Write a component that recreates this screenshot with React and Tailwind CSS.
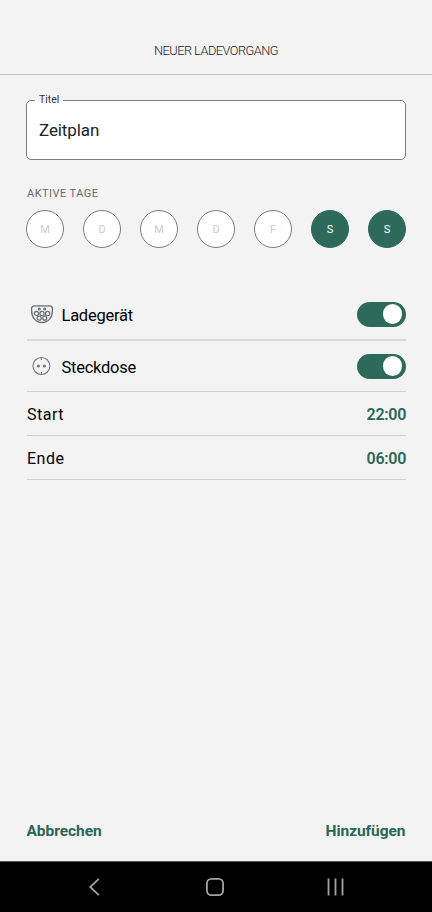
const days = [
  { label: 'M', active: false },
  { label: 'D', active: false },
  { label: 'M', active: false },
  { label: 'D', active: false },
  { label: 'F', active: false },
  { label: 'S', active: true },
  { label: 'S', active: true },
];

function ChargerIcon() {
  return (
    <svg width="24" height="20" viewBox="0 0 24 20" fill="none" stroke="#696c70" className="block">
      <path d="M4.300 1.800h15.400c1.800 0 2.700 1.100 2.700 2.900v2.100c0 6.600-4 11.700-10.400 11.700S1.600 13.400 1.600 6.800V4.700c0-1.800.9-2.900 2.700-2.900z" strokeWidth="1.300" />
      <g strokeWidth="1.200">
        <circle cx="9.300" cy="5" r="0.900" />
        <circle cx="14.700" cy="5" r="0.900" />
        <circle cx="6.400" cy="9.400" r="2.100" />
        <circle cx="12" cy="9.400" r="2.100" />
        <circle cx="17.600" cy="9.400" r="2.100" />
        <circle cx="9.200" cy="14.200" r="2" />
        <circle cx="14.800" cy="14.200" r="2" />
      </g>
    </svg>
  );
}

function SocketIcon() {
  return (
    <svg width="24" height="20" viewBox="0 0 24 20" fill="none" stroke="#75787b" className="block">
      <circle cx="11.400" cy="10" r="8.500" strokeWidth="1.100" />
      <path d="M11.400 1.500v2.500M11.400 16v2.500" strokeWidth="1.100" />
      <circle cx="8.400" cy="10" r="1.600" fill="#75787b" stroke="none" />
      <circle cx="14.400" cy="10" r="1.600" fill="#75787b" stroke="none" />
    </svg>
  );
}

function Toggle() {
  return (
    <button role="switch" aria-checked="true" className="flex h-[25px] w-[49px] items-center justify-end rounded-full bg-[#2d6a5b] pr-1">
      <span className="size-[19.500px] rounded-full bg-white" />
    </button>
  );
}

function DeviceRow({ icon, label, className }) {
  return (
    <div className={`flex items-center justify-between ${className}`}>
      <div className="flex items-center pl-[3px]">
        {icon}
        <span className="ml-[7.500px] pt-[3px] text-[16.500px] leading-6 tracking-[-0.250px] text-black">{label}</span>
      </div>
      <Toggle />
    </div>
  );
}

function TimeRow({ label, time }) {
  return (
    <div className="flex h-11 items-center justify-between border-b border-[#cfcfcf] pt-[2px]">
      <span className="text-base tracking-[0.5px] text-black">{label}</span>
      <span className="text-base font-semibold tracking-[-0.300px] text-[#2a6655]">{time}</span>
    </div>
  );
}

export default function App() {
  return (
    <div className="flex h-[912px] w-[432px] flex-col bg-[#f3f3f3] font-['Roboto',sans-serif]">
      <header className="flex h-[75px] justify-center border-b border-[#c6c6c6] pt-[43px]">
        <h1 className="text-[12.800px] leading-4 font-light tracking-[-0.530px] text-[#222222]">NEUER LADEVORGANG</h1>
      </header>

      <main className="flex-1 px-[26px] pt-[17px]">
        <fieldset className="h-[68px] rounded-[5px] border border-[#7c7c7c] bg-white px-2">
          <legend className="px-1 text-[10.400px] leading-4 text-[#33343c]">Titel</legend>
          <div className="pt-[10px] pl-1 text-[17px] leading-6 tracking-[-0.100px] text-[#20222b]">Zeitplan</div>
        </fieldset>

        <h2 className="mt-[26px] pl-px text-[11px] leading-4 tracking-[0.450px] text-[#68696b]">AKTIVE TAGE</h2>
        <div className="mt-2 flex justify-between">
          {days.map((day, i) => (
            <span
              key={i}
              className={`flex size-[38px] items-center justify-center rounded-full border pt-[2px] text-[11px] ${
                day.active ? 'border-[#2d6a5b] bg-[#2d6a5b] text-white' : 'border-[#7c7c7c] bg-white text-[#cdcdcd]'
              }`}
            >
              {day.label}
            </span>
          ))}
        </div>

        <section className="mt-[41px] pl-px">
          <DeviceRow icon={<ChargerIcon />} label="Ladegerät" className="h-[52px] border-b-2 border-[#dadada]" />
          <DeviceRow icon={<SocketIcon />} label="Steckdose" className="h-[51px] border-b border-[#cfcfcf]" />
          <TimeRow label="Start" time="22:00" />
          <TimeRow label="Ende" time="06:00" />
        </section>
      </main>

      <footer className="flex h-[61px] justify-between px-[26.500px] pt-[21px] text-[15.500px] leading-5 font-bold tracking-[-0.050px] text-[#2a6655]">
        <button className="h-5">Abbrechen</button>
        <button className="h-5">Hinzufügen</button>
      </footer>

      <nav className="flex h-[51px] items-center justify-between border-t border-[#555555] bg-black pr-[86px] pl-[84px]">
        <svg width="20" height="20" viewBox="0 0 20 20" fill="none" stroke="#a3a3a3" strokeWidth="1.800">
          <path d="M14.800 1.800 6.200 10l8.600 8.200" />
        </svg>
        <svg width="20" height="20" viewBox="0 0 20 20" fill="none" stroke="#a3a3a3" strokeWidth="1.800">
          <rect x="1.900" y="1.900" width="16.200" height="16.200" rx="4.500" />
        </svg>
        <svg width="20" height="20" viewBox="0 0 20 20" fill="none" stroke="#a3a3a3" strokeWidth="1.800">
          <path d="M2.500 1.500v17M9.500 1.500v17M16.500 1.500v17" />
        </svg>
      </nav>
    </div>
  );
}
